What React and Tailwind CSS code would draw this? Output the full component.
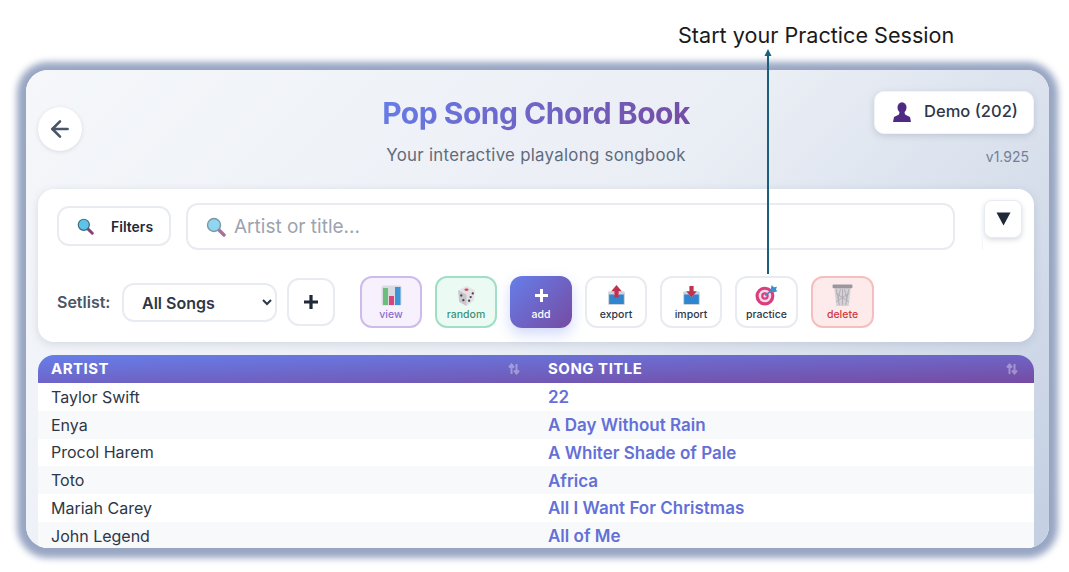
import { ArrowLeft } from 'lucide-react'

const rows = [
  ['Taylor Swift', '22'],
  ['Enya', 'A Day Without Rain'],
  ['Procol Harem', 'A Whiter Shade of Pale'],
  ['Toto', 'Africa'],
  ['Mariah Carey', 'All I Want For Christmas'],
  ['John Legend', 'All of Me'],
]

function SearchIcon({ size = 18, pale = false }) {
  return (
    <svg width={size} height={size} viewBox="0 0 20 20" className="shrink-0">
      <line x1="12.5" y1="12.5" x2="18" y2="18" stroke={pale ? '#a8709a' : '#8a3f78'} strokeWidth="3.4" strokeLinecap="round" />
      <circle cx="8" cy="8" r="6.5" fill={pale ? '#8fd6f0' : '#5cc4e8'} stroke={pale ? '#7f96a4' : '#3c6a80'} strokeWidth="1.4" />
    </svg>
  )
}

function ChartIcon() {
  return (
    <svg width="21" height="21" viewBox="0 0 21 21">
      <rect x="0.5" y="0.5" width="20" height="20" rx="1.5" fill="#d9dbe0" />
      <rect x="2" y="3" width="5" height="17" fill="#6cbf7a" />
      <rect x="8" y="11" width="5" height="9" fill="#d9437f" />
      <rect x="14" y="2" width="5.5" height="18" fill="#3d94d8" />
    </svg>
  )
}

function DiceIcon() {
  return (
    <svg width="23" height="23" viewBox="0 0 22 22">
      <path d="M3 6 11 2l8 4-1 10-7 5-7-4z" fill="#e4e2e4" />
      <path d="M3 6l8 4v11l-7-4z" fill="#c9c6cc" />
      <ellipse cx="11" cy="5.5" rx="2" ry="1.1" fill="#d6455c" />
      <circle cx="6" cy="11" r="1.1" fill="#4a4250" />
      <circle cx="8" cy="15.5" r="1.1" fill="#4a4250" />
      <circle cx="17" cy="9" r="1.1" fill="#4a4250" />
      <circle cx="15" cy="12.5" r="1.1" fill="#4a4250" />
      <circle cx="13.5" cy="16" r="1.1" fill="#4a4250" />
    </svg>
  )
}

function TrayIcon({ down = false }) {
  return (
    <svg width="19" height="21" viewBox="0 0 18 20">
      <rect x="1" y="6" width="16" height="13" rx="1.5" fill="#cbd3dd" />
      <path d="M2 9h4.500L9 12l2.500-3H16v9H2z" fill="#2f86cf" />
      {down ? (
        <path d="M7 1h4v5h3l-5 6-5-6h3z" fill="#c2304f" />
      ) : (
        <path d="M9 0l5 6h-3v6H7V6H4z" fill="#c2304f" />
      )}
    </svg>
  )
}

function TargetIcon() {
  return (
    <svg width="23" height="22" viewBox="0 0 22 21">
      <circle cx="9.500" cy="11.500" r="9" fill="#d93f80" />
      <circle cx="9.500" cy="11.500" r="6" fill="#f3dbe5" />
      <circle cx="9.500" cy="11.500" r="3.600" fill="#d93f80" />
      <circle cx="9.500" cy="11.500" r="1.500" fill="#f3dbe5" />
      <path d="M10 11 18 4" stroke="#3d8fc9" strokeWidth="1.600" />
      <path d="M15 5l1-4 2 2 3-.5-1 3 1.500 1.500-4 1z" fill="#3d8fc9" />
    </svg>
  )
}

function TrashIcon() {
  return (
    <svg width="23" height="24" viewBox="0 0 22 23">
      <path d="M3 4h16l-2 18H5z" fill="#d5d2d6" />
      <path d="M5 6l3 15M9 6l-2 9M11 6v15M13 6l2 9M17 6l-3 15M5 10l12 8M17 10 5 18" stroke="#a9a5ad" strokeWidth="0.800" fill="none" />
      <rect x="1.500" y="1.500" width="19" height="3.500" rx="1" fill="#9b979f" />
    </svg>
  )
}

function PersonIcon() {
  return (
    <svg width="20" height="20" viewBox="0 0 20 20">
      <ellipse cx="10" cy="5.500" rx="4.500" ry="5.300" fill="#4f2a84" />
      <path d="M7.500 10h5l.5 2.500 5 2.500 1 5H1l1-5 5-2.500z" fill="#4f2a84" />
    </svg>
  )
}

function SortIcon() {
  return (
    <svg width="12" height="12" viewBox="0 0 12 12" className="opacity-35">
      <path d="M3.500 11V3M1 4.500 3.500 1.500 6 4.500M8.500 1v8M6 7.500 8.500 10.500 11 7.500" stroke="#fff" strokeWidth="2" fill="none" />
    </svg>
  )
}

function ToolButton({ label, className, labelClass, width = 'w-[62px]', children }) {
  return (
    <button className={`${width} h-[52px] shrink-0 rounded-[12px] border-2 flex flex-col items-center pt-[5px] ${className}`}>
      <span className="h-[24px] flex items-center justify-center">{children}</span>
      <span className={`mt-[1px] text-[10.5px] leading-[14px] font-medium ${labelClass}`}>{label}</span>
    </button>
  )
}

export default function App() {
  return (
    <div className="relative h-[572px] w-[1069px] overflow-hidden bg-white font-['Inter',sans-serif] text-[#2d3748]">
      <div className="h-[70px] pt-[19px] pl-[678px] text-[21.6px] leading-[32px] text-[#1a1a1a] whitespace-nowrap">
        Start your Practice Session
      </div>

      <div className="ml-[26px] w-[1023px] h-[478px] overflow-hidden rounded-[22px] bg-[linear-gradient(135deg,#f5f7fa,#eaeef5_50%,#c3cfe2)] pl-[12px] pr-[15px] pt-[21px] shadow-[0_1px_7px_9px_#98a6c3]">
        <header className="h-[98px] grid grid-cols-[160px_1fr_160px]">
          <div className="pt-[16px]">
            <button className="w-[44px] h-[44px] rounded-full bg-white shadow-[0_1px_4px_rgba(100,116,139,0.2)] flex items-center justify-center">
              <ArrowLeft size={26} strokeWidth={2.4} color="#4a5568" />
            </button>
          </div>
          <div className="text-center pt-[4px]">
            <h1 className="text-[30px] leading-[36px] font-bold tracking-[-0.5px] bg-[linear-gradient(135deg,#667eea,#764ba2)] bg-clip-text text-transparent w-fit mx-auto">
              Pop Song Chord Book
            </h1>
            <p className="mt-[12px] text-[16.8px] leading-[24px] text-[#5f6b7c] tracking-[0.3px]">Your interactive playalong songbook</p>
          </div>
          <div>
            <button className="w-[160px] h-[43px] pb-[2px] pl-[2px] rounded-[10px] bg-white border border-gray-100 shadow-[0_2px_6px_rgba(100,116,139,0.25)] flex items-center justify-center gap-[12px] text-[16.5px] font-medium text-[#2d3748]">
              <PersonIcon />
              <span>Demo (202)</span>
            </button>
            <p className="mt-[13px] pr-[5px] text-right text-[14px] leading-[20px] text-[#718096]">v1.925</p>
          </div>
        </header>

        <section className="h-[153px] rounded-[16px] bg-white pt-[14px] pl-[19px] shadow-[0_2px_8px_rgba(100,116,139,0.2)]">
          <div className="flex items-start h-[47px]">
            <button className="w-[114px] h-[40px] mt-[3px] pt-[1px] rounded-[12px] border-2 border-[#e8ebef] flex items-center pl-[18px] gap-[17px] text-[14px] font-semibold text-[#1f2937]">
              <SearchIcon size={17} />
              <span>Filters</span>
            </button>
            <div className="ml-[15px] w-[769px] h-[47px] pt-[1px] rounded-[12px] border-2 border-[#e8ebef] flex items-center pl-[18px] gap-[8px] text-[19px] text-[#9ca3af]">
              <SearchIcon size={20} pale />
              <span>Artist or title...</span>
            </div>
            <div className="ml-[27px] -mt-[3px]">
              <button className="ml-[2px] w-[38px] h-[38px] rounded-[8px] bg-white border border-[#e8ebef] shadow-[0_2px_5px_rgba(100,116,139,0.25)] flex items-center justify-center">
                <svg width="15" height="14" viewBox="0 0 15 14">
                  <path d="M0.500 0.500h14L7.500 13.500z" fill="#1f2937" />
                </svg>
              </button>
              <div className="h-[12px] w-px bg-gray-100" />
            </div>
          </div>

          <div className="flex items-center mt-[26px] h-[52px]">
            <span className="w-[53px] shrink-0 text-[16px] font-semibold text-[#4a5568] whitespace-nowrap">Setlist:</span>
            <select className="ml-[12px] w-[155px] h-[39px] shrink-0 rounded-[12px] border-2 border-[#e8ebef] bg-white pl-[14px] pr-[2px] pt-[2px] text-[16px] font-semibold text-[#2d3748]">
              <option>All Songs</option>
            </select>
            <button className="ml-[10px] w-[48px] h-[48px] shrink-0 rounded-[12px] border-2 border-[#e8ebef] flex items-center justify-center">
              <svg width="14" height="14" viewBox="0 0 14 14">
                <path d="M5.400 0h3.200v5.400H14v3.200H8.600V14H5.400V8.600H0V5.400h5.400z" fill="#1f2937" />
              </svg>
            </button>
            <div className="ml-[25px] flex gap-[13px]">
              <ToolButton label="view" className="border-[#cdbcea] bg-[#f6f1fd]" labelClass="text-[#8a6fd0]">
                <ChartIcon />
              </ToolButton>
              <ToolButton label="random" className="border-[#9fe0c5] bg-[#ecfaf4]" labelClass="text-[#3f9277]">
                <DiceIcon />
              </ToolButton>
              <ToolButton label="add" className="border-transparent bg-[linear-gradient(135deg,#667eea,#764ba2)] bg-origin-border shadow-[0_6px_14px_rgba(102,126,234,0.3)]" labelClass="text-white">
                <svg width="13" height="13" viewBox="0 0 13 13">
                  <path d="M5 0h3v5h5v3H8v5H5V8H0V5h5z" fill="#fff" />
                </svg>
              </ToolButton>
              <ToolButton label="export" className="border-[#e8ebef] bg-white" labelClass="text-[#2d3748]">
                <TrayIcon />
              </ToolButton>
              <ToolButton label="import" className="border-[#e8ebef] bg-white" labelClass="text-[#2d3748]">
                <TrayIcon down />
              </ToolButton>
              <ToolButton label="practice" width="w-[63px]" className="border-[#e8ebef] bg-white" labelClass="text-[#2d3748]">
                <TargetIcon />
              </ToolButton>
              <ToolButton label="delete" width="w-[63px]" className="border-[#f5bfc0] bg-[#fdeaea]" labelClass="text-[#d0393f]">
                <TrashIcon />
              </ToolButton>
            </div>
          </div>
        </section>

        <section className="mt-[13px] rounded-t-[16px] overflow-hidden bg-white">
          <div className="h-[28px] grid grid-cols-[497px_1fr] bg-[linear-gradient(to_bottom_right,#667eea,#764ba2)] text-[15px] font-bold text-white tracking-[0.5px]">
            <div className="flex items-center justify-between pl-[13px] pr-[15px]">
              <span>ARTIST</span>
              <SortIcon />
            </div>
            <div className="flex items-center justify-between pl-[13px] pr-[16px]">
              <span>SONG TITLE</span>
              <SortIcon />
            </div>
          </div>
          {rows.map(([artist, title], i) => (
            <div key={title} className={`h-[27.8px] grid grid-cols-[497px_1fr] items-center text-[16px] ${i % 2 ? 'bg-[#f8f9fb]' : 'bg-white'}`}>
              <span className="pl-[13px] text-[#2d3748]">{artist}</span>
              <span className="pl-[13px] pt-[2px] text-[17px] font-semibold text-[#6370d8]">{title}</span>
            </div>
          ))}
        </section>
      </div>

      {/* callout arrow sits over the panel */}
      <svg width="10" height="226" viewBox="0 0 10 226" className="absolute left-[763px] top-[49px]">
        <path d="M5 6V225" stroke="#1c5f7a" strokeWidth="2" />
        <path d="M5 0 8.500 7h-7z" fill="#1c5f7a" />
      </svg>
    </div>
  )
}
